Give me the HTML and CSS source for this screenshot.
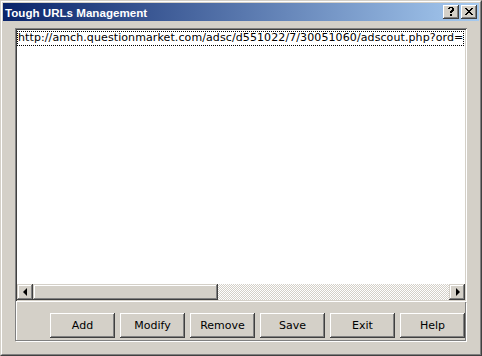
FILE: index.html
```html
<!DOCTYPE html>
<html>
<head>
<meta charset="utf-8">
<link rel="stylesheet" href="styles.css">
</head>
<body>
<div class="window">
  <div class="frame">
    <div class="titlebar">
      <span class="title">Tough URLs Management</span>
      <div class="caption-btns">
        <span class="cbtn">
          <svg width="8" height="9" viewBox="0 0 8 9"><path d="M1 1h1V0h4v1h1v3H6v1H5v1H3V4h1V3h1V1H3v1H1z M3 7h2v2H3z" fill="#000"/></svg>
        </span>
        <span class="cbtn close">
          <svg width="8" height="7" viewBox="0 0 8 7"><path d="M0 0h2v1h1v1h2V1h1V0h2v1H7v1H6v1H5v1h1v1h1v1h1v1H6V6H5V5H3v1H2v1H0V6h1V5h1V4h1V3H2V2H1V1H0z" fill="#000"/></svg>
        </span>
      </div>
    </div>
    <div class="client">
      <div class="listbox">
        <div class="items">
          <span class="item focus">http://amch.questionmarket.com/adsc/d551022/7/30051060/adscout.php?ord=</span>
        </div>
        <div class="hscroll">
          <span class="sbtn"><span class="arrow left"></span></span>
          <span class="thumb"></span>
          <span class="track"></span>
          <span class="sbtn"><span class="arrow right"></span></span>
        </div>
      </div>
      <div class="panel">
        <button class="btn">Add</button>
        <button class="btn">Modify</button>
        <button class="btn">Remove</button>
        <button class="btn">Save</button>
        <button class="btn">Exit</button>
        <button class="btn">Help</button>
      </div>
    </div>
  </div>
</div>
</body>
</html>
```
FILE: styles.css
```css
html, body {
  margin: 0;
  padding: 0;
  background: #d4d0c8;
}
.window {
  width: 482px;
  height: 356px;
  box-sizing: border-box;
  border: 1px solid;
  border-color: #d4d0c8 #404040 #404040 #d4d0c8;
  background: #d4d0c8;
  font-family: "DejaVu Sans", Verdana, sans-serif;
}
.frame {
  height: 100%;
  box-sizing: border-box;
  border: 1px solid;
  border-color: #fff #808080 #808080 #fff;
  padding: 1px;
}
.titlebar {
  height: 18px;
  background: linear-gradient(to right, #0a246a, #a6caf0);
  display: flex;
  align-items: center;
  justify-content: space-between;
}
.title {
  color: #fff;
  font-family: "Liberation Sans", Arial, sans-serif;
  font-weight: bold;
  font-size: 11.6px;
  padding-left: 2px;
}
.caption-btns {
  display: flex;
  gap: 2px;
  padding-right: 2px;
}
.cbtn {
  width: 16px;
  height: 14px;
  box-sizing: border-box;
  background: #d4d0c8;
  box-shadow: inset -1px -1px #404040, inset 1px 1px #fff, inset -2px -2px #808080;
  display: flex;
  align-items: center;
  justify-content: center;
  padding-bottom: 1px;
}
.client {
  padding: 7px 12px 0 12px;
}
.listbox {
  height: 274px;
  box-sizing: border-box;
  background: #fff;
  box-shadow: inset 1px 1px #808080, inset -1px -1px #fff, inset 2px 2px #404040, inset -2px -2px #d4d0c8;
  padding: 2px;
  display: flex;
  flex-direction: column;
}
.items {
  flex: 1;
  overflow: hidden;
  font-size: 11px;
  white-space: nowrap;
  padding-top: 1px;
}
.item {
  display: inline-block;
  height: 15px;
  line-height: 14px;
  padding: 0 1px;
  color: #000;
  letter-spacing: 0.1px;
}
.focus {
  outline: 1px dotted #000;
  outline-offset: -1px;
}
.hscroll {
  height: 16px;
  display: flex;
}
.sbtn {
  width: 16px;
  height: 16px;
  flex: none;
  box-sizing: border-box;
  background: #d4d0c8;
  box-shadow: inset -1px -1px #404040, inset 1px 1px #d4d0c8, inset -2px -2px #808080, inset 2px 2px #fff;
  display: flex;
  align-items: center;
  justify-content: center;
}
.arrow {
  width: 0;
  height: 0;
  border-top: 4px solid transparent;
  border-bottom: 4px solid transparent;
}
.arrow.left {
  border-right: 4px solid #000;
  margin-left: -1px;
}
.arrow.right {
  border-left: 4px solid #000;
  margin-left: 1px;
}
.thumb {
  width: 185px;
  flex: none;
  background: #d4d0c8;
  box-shadow: inset -1px -1px #404040, inset 1px 1px #d4d0c8, inset -2px -2px #808080, inset 2px 2px #fff;
}
.track {
  flex: 1;
  background-color: #fff;
  background-image: repeating-conic-gradient(#d4d0c8 0 25%, #fff 0 50%);
  background-size: 2px 2px;
}
.panel {
  height: 39px;
  box-sizing: border-box;
  border: 1px solid #808080;
  border-top: 0;
  box-shadow: inset 1px 0 #fff, 1px 1px #fff;
  display: flex;
  justify-content: flex-end;
  align-items: flex-end;
  gap: 5px;
  padding: 0 0 2px 0;
  margin-right: 1px;
}
.btn {
  width: 65px;
  height: 25px;
  padding: 0;
  margin: 0;
  border: 0;
  background: #d4d0c8;
  box-shadow: inset -1px -1px #404040, inset 1px 1px #fff, inset -2px -2px #808080, inset 2px 2px #d4d0c8;
  font-family: "DejaVu Sans", Verdana, sans-serif;
  font-size: 11px;
  color: #000;
}
```
